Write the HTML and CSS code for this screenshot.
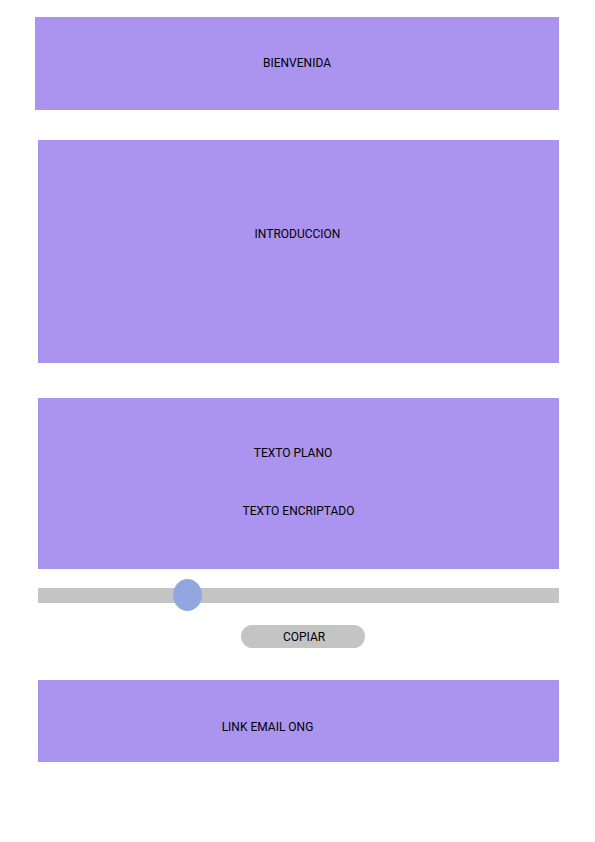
FILE: index.html
```html
<!DOCTYPE html>
<html lang="es">
<head>
    <meta charset="UTF-8">
    <meta name="viewport" content="width=device-width, initial-scale=1.0">
    <title>Encriptador</title>
    <link rel="stylesheet" href="styles.css">
</head>
<body>
    <div class="page">
        <section class="panel welcome">
            <p>BIENVENIDA</p>
        </section>

        <section class="panel intro">
            <p>INTRODUCCION</p>
        </section>

        <section class="panel texts">
            <p class="plain">TEXTO PLANO</p>
            <p class="encrypted">TEXTO ENCRIPTADO</p>
        </section>

        <!-- slider -->
        <div class="slider">
            <div class="track"></div>
            <div class="knob"></div>
        </div>

        <div class="actions">
            <button class="copy-btn">COPIAR</button>
        </div>

        <section class="panel contact">
            <p>LINK EMAIL ONG</p>
        </section>
    </div>
</body>
</html>
```

FILE: styles.css
```css
* {
    margin: 0;
    padding: 0;
    box-sizing: border-box;
}

body {
    font-family: 'Roboto', 'Liberation Sans', sans-serif;
    font-size: 12px;
    color: #000;
    background: #ffffff;
    width: 595px;
    height: 842px;
}

.page {
    display: flex;
    flex-direction: column;
    padding-top: 17px;
}

.panel {
    background: #ab94f0;
    margin-left: 38px;
    width: 521px;
    text-align: center;
}

.panel p {
    line-height: 14px;
}

.welcome {
    margin-left: 35px;
    width: 524px;
    height: 93px;
    padding-bottom: 2px;
    display: flex;
    align-items: center;
    justify-content: center;
}

.intro {
    margin-top: 30px;
    height: 223px;
    padding-top: 87px;
    padding-right: 2px;
}

.texts {
    margin-top: 35px;
    height: 171px;
    padding-top: 48px;
}

.texts .plain {
    padding-right: 11px;
}

.texts .encrypted {
    margin-top: 44px;
}

.slider {
    position: relative;
    margin-top: 19px;
    margin-left: 38px;
    width: 521px;
    height: 15px;
}

.track {
    height: 15px;
    background: #c4c4c4;
}

.knob {
    position: absolute;
    left: 135px;
    top: -9px;
    width: 29px;
    height: 32px;
    border-radius: 50%;
    background: #92a6e2;
}

.actions {
    margin-top: 22px;
    padding-left: 241px;
}

.copy-btn {
    font-family: inherit;
    font-size: 12px;
    color: #000;
    width: 124px;
    height: 23px;
    padding-left: 2px;
    border: none;
    border-radius: 12px;
    background: #c4c4c4;
}

.contact {
    margin-top: 32px;
    height: 82px;
    padding-top: 40px;
    padding-right: 62px;
}
```
